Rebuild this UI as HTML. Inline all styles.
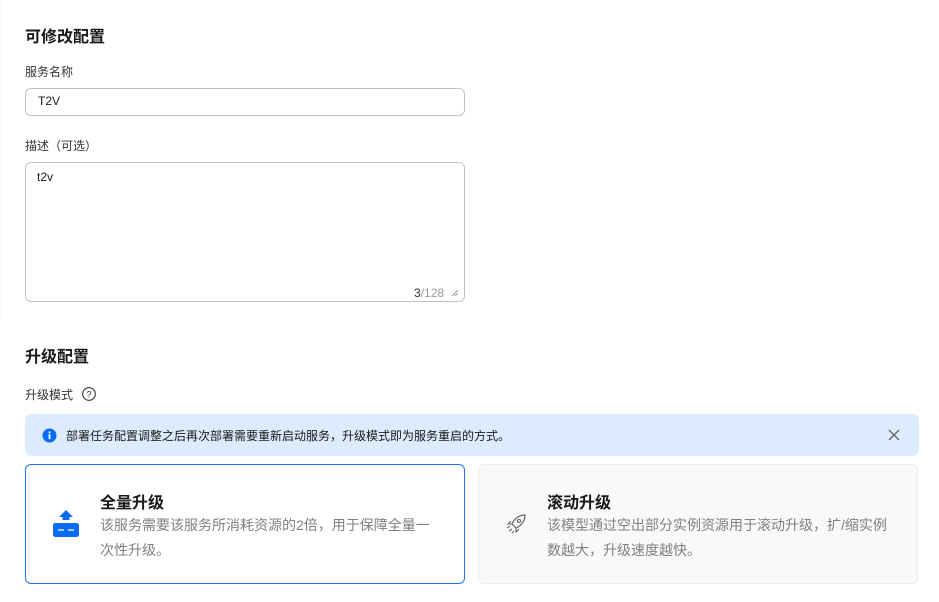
<!DOCTYPE html>
<html><head><meta charset="utf-8"><style>
*{box-sizing:border-box;margin:0;padding:0}
body{width:939px;height:602px;background:#fff;font-family:"Liberation Sans","Noto Sans CJK SC",sans-serif;color:#191919;position:relative;overflow:hidden}
.a{position:absolute}
.h{font-size:16px;font-weight:bold;color:#191919}
.l{font-size:12px;color:#333}
.inp{border:1px solid #c2c2c2;border-radius:6px;background:#fff}
.ct{font-size:16px;font-weight:bold;color:#191919}
.cd{font-size:14px;color:#808080;line-height:25px}
</style></head><body>
<div class="a" style="left:0;top:0;width:3px;height:320px;background:#fafafa"></div>
<div class="a h" style="left:25px;top:23px">可修改配置</div>
<div class="a l" style="left:25px;top:63px">服务名称</div>
<div class="a inp" style="left:25px;top:88px;width:440px;height:28px"></div>
<div class="a" style="left:38px;top:94px;font-size:12px;color:#191919">T2V</div>
<div class="a l" style="left:25px;top:137px">描述（可选）</div>
<div class="a inp" style="left:25px;top:162px;width:440px;height:140px"></div>
<div class="a" style="left:37px;top:170px;font-size:12px;color:#191919">t2v</div>
<div class="a" style="left:414px;top:286px;font-size:12px;color:#999"><span style="color:#333">3</span>/128</div>
<svg class="a" style="left:450px;top:288px" width="10" height="10"><path d="M2 8L8 2M5 8L8 5" stroke="#999" stroke-width="1"/></svg>
<div class="a h" style="left:25px;top:343px">升级配置</div>
<div class="a l" style="left:25px;top:386px">升级模式</div>
<svg class="a" style="left:81px;top:386px" width="16" height="16"><circle cx="8" cy="8" r="6.3" fill="none" stroke="#333" stroke-width="1.1"/><text x="8" y="11.5" font-size="9" text-anchor="middle" fill="#333" font-family="Liberation Sans">?</text></svg>
<div class="a" style="left:25px;top:414px;width:894px;height:42px;background:#dcebfd;border-radius:6px"></div>
<svg class="a" style="left:42px;top:428px" width="15" height="15"><circle cx="7.5" cy="7.5" r="7" fill="#0a6cf2"/><rect x="6.6" y="6.2" width="1.8" height="5" fill="#fff"/><rect x="6.6" y="3.4" width="1.8" height="1.8" fill="#fff"/></svg>
<div class="a" style="left:66px;top:427px;font-size:12px;color:#191919">部署任务配置调整之后再次部署需要重新启动服务，升级模式即为服务重启的方式。</div>
<svg class="a" style="left:887px;top:428px" width="14" height="14"><path d="M2 2L12 12M12 2L2 12" stroke="#666" stroke-width="1.4"/></svg>
<div class="a" style="left:25px;top:464px;width:440px;height:120px;border:1px solid #2070f0;border-radius:6px;background:#fff"></div>
<svg class="a" style="left:52px;top:509px" width="28" height="30"><path d="M14 1L21 8H17.5V11H10.5V8H7Z" fill="#0a6cf2"/><rect x="1" y="14" width="26" height="14" rx="2.5" fill="#0a6cf2"/><path d="M6 21H12M16 21H22" stroke="#fff" stroke-width="1.3"/></svg>
<div class="a ct" style="left:100px;top:489px">全量升级</div>
<div class="a cd" style="left:100px;top:513px;width:340px">该服务需要该服务所消耗资源的2倍，用于保障全量一次性升级。</div>
<div class="a" style="left:478px;top:464px;width:440px;height:120px;border:1px solid #ebebeb;border-radius:6px;background:#f9f9f9"></div>
<svg class="a" style="left:504px;top:512px" width="24" height="24"><path d="M21 3C15 3 10 7 8 12L12 16C17 14 21 9 21 3Z" fill="none" stroke="#666" stroke-width="1.2" stroke-linejoin="round"/><circle cx="15" cy="9" r="1.6" fill="none" stroke="#666" stroke-width="1.1"/><path d="M8 12L4 12L7 9M12 16L12 20L15 17M3 16L6 14M5 19L8 17M8 21L10 19" fill="none" stroke="#666" stroke-width="1.1"/></svg>
<div class="a ct" style="left:547px;top:489px">滚动升级</div>
<div class="a cd" style="left:547px;top:513px;width:346px">该模型通过空出部分实例资源用于滚动升级，扩/缩实例数越大，升级速度越快。</div>
</body></html>
